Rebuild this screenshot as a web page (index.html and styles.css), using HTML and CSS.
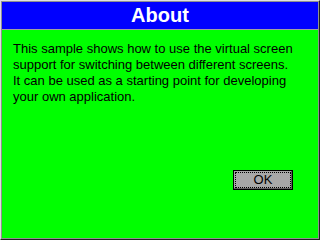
FILE: index.html
```html
<!DOCTYPE html>
<html>
<head>
<meta charset="utf-8">
<link rel="stylesheet" href="styles.css">
</head>
<body>
<div class="frame">
  <div class="inner">
    <div class="titlebar">About</div>
    <div class="content">
      <p class="msg">This sample shows how to use the virtual screen<br>support for switching between different screens.<br>It can be used as a starting point for developing<br>your own application.</p>
      <div class="actions">
        <button class="btn"><span class="focus">OK</span></button>
      </div>
    </div>
  </div>
</div>
</body>
</html>
```

FILE: styles.css
```css
html, body {
  margin: 0;
  padding: 0;
  width: 320px;
  height: 240px;
  overflow: hidden;
  background: #000;
}
.frame {
  box-sizing: border-box;
  width: 320px;
  height: 240px;
  border-top: 1px solid #e0e0e0;
  border-left: 1px solid #e0e0e0;
  border-right: 1px solid #202020;
  border-bottom: 1px solid #202020;
}
.inner {
  box-sizing: border-box;
  height: 100%;
  border: 1px solid #909090;
  display: flex;
  flex-direction: column;
  background: #00ff00;
}
.titlebar {
  height: 27px;
  background: #0000ff;
  border-bottom: 1px solid #a0a0a0;
  color: #fff;
  font-family: "Liberation Sans", Arial, sans-serif;
  font-weight: bold;
  font-size: 20px;
  line-height: 27px;
  text-align: center;
}
.content {
  flex: 1;
  display: flex;
  flex-direction: column;
  padding: 11px 0 0 11px;
}
.msg {
  margin: 0;
  font-family: "Liberation Sans", Arial, sans-serif;
  font-size: 13px;
  line-height: 16px;
  color: #000;
}
.actions {
  display: flex;
  justify-content: flex-end;
  margin-top: 65px;
  padding-right: 25px;
}
.btn {
  box-sizing: border-box;
  width: 60px;
  height: 20px;
  padding: 1px;
  background: #a8a8a8;
  border: 1px solid #000;
  box-shadow: inset -1px -1px 0 #606060;
  display: flex;
  font-family: "Liberation Sans", Arial, sans-serif;
  font-size: 13px;
  color: #000;
}
.focus {
  flex: 1;
  border: 1px dotted #000;
  display: flex;
  align-items: center;
  justify-content: center;
  line-height: 14px;
}
```
